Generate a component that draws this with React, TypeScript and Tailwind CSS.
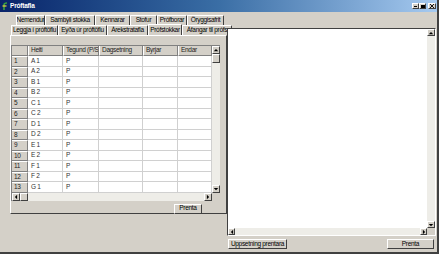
import React from 'react'

const font = { fontFamily: '"Liberation Sans", Arial, sans-serif' }

const raised = 'border border-t-white border-l-white border-r-[#404040] border-b-[#404040]'
const txt = 'text-[6.5px] tracking-[-0.3px] leading-none whitespace-nowrap'

function Arrow({ dir }: { dir: 'up' | 'down' | 'left' | 'right' }) {
  const pts = {
    up: '1,4 4,1 7,4',
    down: '1,1 4,4 7,1',
    left: '4,1 1,4 4,7',
    right: '1,1 4,4 1,7',
  }[dir]
  const vert = dir === 'up' || dir === 'down'
  return (
    <svg width={vert ? 6 : 4} height={vert ? 4 : 6} viewBox={vert ? '0 0 8 5' : '0 0 5 8'}>
      <polygon points={pts} fill="#000" />
    </svg>
  )
}

function ScrollBtn({ dir, className = '' }: { dir: 'up' | 'down' | 'left' | 'right'; className?: string }) {
  return (
    <div className={`flex items-center justify-center bg-[#d4d0c8] ${raised} ${className}`}>
      <Arrow dir={dir} />
    </div>
  )
}

const rowsData = ['A 1', 'A 2', 'B 1', 'B 2', 'C 1', 'C 2', 'D 1', 'D 2', 'E 1', 'E 2', 'F 1', 'F 2', 'G 1']

const columns = [
  { title: 'Heiti', w: 'w-[35px]' },
  { title: 'Tegund (P/S)', w: 'w-[36px]' },
  { title: 'Dagsetning', w: 'w-[44px]' },
  { title: 'Byrjar', w: 'w-[35px]' },
  { title: 'Endar', w: 'w-[34px]' },
]

const tabsTop = [
  { label: 'Nemendur', w: 'w-[29px]' },
  { label: 'Sambýli stokka', w: 'w-[50px]' },
  { label: 'Kennarar', w: 'w-[35px]' },
  { label: 'Stofur', w: 'w-[27px]' },
  { label: 'Prófborar', w: 'w-[30px]' },
  { label: 'Öryggisafrit', w: 'w-[37px]' },
]

const tabsBottom = [
  { label: 'Leggja í próftöflu', w: 'w-[47px]' },
  { label: 'Eyða úr próftöflu', w: 'w-[49px]' },
  { label: 'Árekstratafla', w: 'w-[41px]' },
  { label: 'Prófstokkar', w: 'w-[34px]', active: true },
  { label: 'Áfangar til prófs', w: 'w-[50px]' },
]

function Tab({ label, w, active }: { label: string; w: string; active?: boolean }) {
  return (
    <div
      className={`${w} shrink-0 flex items-center justify-center overflow-hidden ${txt} text-black border-l border-t border-r border-l-white border-t-white border-r-[#404040] rounded-t-[1px] ${
        active ? 'relative z-10 -mb-[1px] h-[11px] -mt-[1px] bg-[#d4d0c8]' : 'h-[10px]'
      }`}
    >
      {label}
    </div>
  )
}

function DataGrid() {
  return (
    <div className="w-[209px] flex flex-col">
      <div className="flex">
        <div className="w-[201px] border-l border-t border-[#808080] bg-white">
          {/* header */}
          <div className="flex h-[10px]">
            <div className="w-[16px] bg-[#d4d0c8] border-r border-b border-[#808080]" />
            {columns.map(c => (
              <div
                key={c.title}
                className={`${c.w} bg-[#d4d0c8] border-r border-b border-[#808080] border-l border-l-white pl-[2px] flex items-center overflow-hidden ${txt} text-[#222]`}
              >
                {c.title}
              </div>
            ))}
          </div>
          {rowsData.map((r, i) => (
            <div key={r} className="flex h-[10.5px]">
              <div className={`w-[16px] bg-[#d4d0c8] border-r border-b border-[#808080] border-t border-t-white pl-[2px] flex items-center ${txt} text-[#222]`}>
                {i + 1}
              </div>
              {columns.map((c, ci) => (
                <div
                  key={c.title}
                  className={`${c.w} border-r border-b border-[#d0d0d0] pl-[3px] flex items-center overflow-hidden ${txt} text-[#333]`}
                >
                  {ci === 0 ? r : ci === 1 ? 'P' : ''}
                </div>
              ))}
            </div>
          ))}
        </div>
        {/* vertical scrollbar */}
        <div className="w-[8px] flex flex-col bg-[#eeede8] border-t border-[#808080]">
          <ScrollBtn dir="up" className="h-[8px]" />
          <div className={`h-[9px] bg-[#d4d0c8] ${raised}`} />
          <div className="flex-1" />
          <ScrollBtn dir="down" className="h-[8px]" />
        </div>
      </div>
      {/* horizontal scrollbar */}
      <div className="flex h-[8px]">
        <div className="w-[201px] flex bg-[#eeede8] border-l border-[#808080]">
          <ScrollBtn dir="left" className="w-[8px]" />
          <div className={`w-[8px] bg-[#d4d0c8] ${raised}`} />
          <div className="flex-1" />
          <ScrollBtn dir="right" className="w-[8px]" />
        </div>
        <div className="w-[8px] bg-[#d4d0c8]" />
      </div>
    </div>
  )
}

function Button({ label, w }: { label: string; w: string }) {
  return (
    <div className={`${w} h-[10px] flex items-center justify-center bg-[#d4d0c8] ${raised} ${txt} text-black`}>
      {label}
    </div>
  )
}

export default function App() {
  return (
    <div style={font} className="w-[439px] h-[254px] bg-[#d4d0c8] overflow-hidden flex flex-col border-r-2 border-b-2 border-[#404040]">
      {/* Title bar */}
      <div className="h-[12px] shrink-0 flex items-center bg-linear-to-r from-[#0a246a] via-[#3a6ea5] to-[#a6caf0] pl-[2px] pr-[1px]">
        <svg width="6" height="8" viewBox="0 0 6 8" className="mr-[2px]">
          <path d="M2 8 L2 3 Q2 1 5 1" stroke="#3aa040" strokeWidth="1.6" fill="none" />
          <path d="M0.5 4 L4.5 4" stroke="#f0d040" strokeWidth="1.2" />
        </svg>
        <span className="text-[6.5px] tracking-[-0.2px] font-bold text-white leading-none">Próftafla</span>
        <div className="flex-1" />
        <div className="flex items-center">
          <div className={`w-[7px] h-[6px] bg-[#d4d0c8] ${raised} flex items-end justify-center pb-[1px]`}>
            <div className="w-[3px] h-[1px] bg-black" />
          </div>
          <div className={`w-[7px] h-[6px] bg-[#d4d0c8] ${raised} flex items-center justify-center`}>
            <div className="w-[4px] h-[3px] border border-black border-t-2" />
          </div>
          <div className={`ml-[2px] w-[8px] h-[6px] bg-[#d4d0c8] ${raised} flex items-center justify-center`}>
            <svg width="4" height="4" viewBox="0 0 4 4">
              <path d="M0 0 L4 4 M4 0 L0 4" stroke="#000" strokeWidth="0.9" />
            </svg>
          </div>
        </div>
      </div>

      <div className="flex flex-1">
        {/* Left: tab control */}
        <div className="w-[227px] shrink-0 pl-[10px] pt-[3px] flex flex-col">
          <div className="flex h-[10px] pl-[6px]">
            {tabsTop.map(t => (
              <Tab key={t.label} {...t} />
            ))}
          </div>
          <div className="flex h-[10px] pl-[1px] overflow-visible">
            {tabsBottom.map(t => (
              <Tab key={t.label} {...t} />
            ))}
          </div>
          <div className={`w-[217px] h-[179px] ${raised} pt-[9px] flex flex-col`}>
            <DataGrid />
            <div className="flex justify-end pr-[24px] mt-[3px]">
              <Button label="Prenta" w="w-[28px]" />
            </div>
          </div>
        </div>

        {/* Right: print preview */}
        <div className="flex-1 flex flex-col pt-[16px] relative z-20">
          <div className="w-[209px] h-[208px] flex flex-col border border-t-[#404040] border-l-[#404040] border-r-white border-b-white bg-white">
            <div className="flex flex-1">
              <div className="flex-1 bg-white" />
              <div className="w-[8px] flex flex-col bg-[#eeede8]">
                <ScrollBtn dir="up" className="h-[7px]" />
                <div className="flex-1" />
                <ScrollBtn dir="down" className="h-[7px]" />
              </div>
            </div>
            <div className="flex h-[7px]">
              <div className="flex-1 flex bg-[#eeede8]">
                <ScrollBtn dir="left" className="w-[7px]" />
                <div className="flex-1" />
                <ScrollBtn dir="right" className="w-[7px]" />
              </div>
              <div className="w-[8px] bg-[#d4d0c8]" />
            </div>
          </div>
          <div className="flex justify-between mt-[3px] pl-[1px] pr-[3px]">
            <Button label="Uppsetning prentara" w="w-[59px]" />
            <Button label="Prenta" w="w-[47px]" />
          </div>
        </div>
      </div>
    </div>
  )
}
